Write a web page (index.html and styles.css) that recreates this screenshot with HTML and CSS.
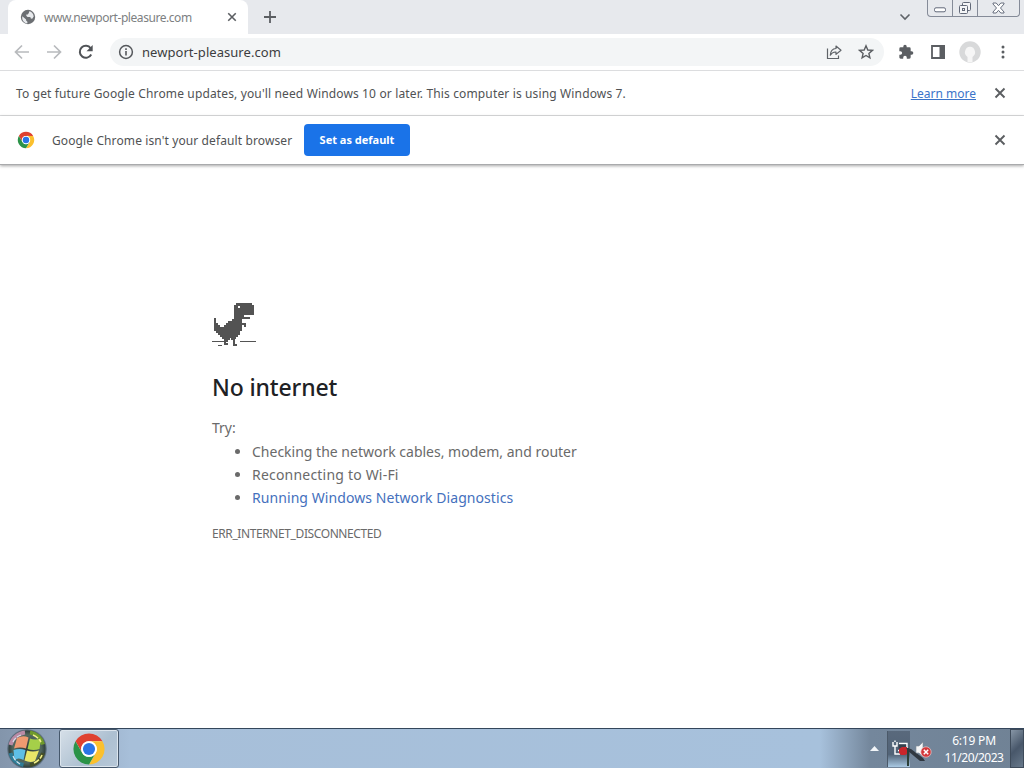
FILE: index.html
```
<!DOCTYPE html>
<html lang="en">
  <head>
    <meta charset="UTF-8" />
    <meta name="viewport" content="width=device-width, initial-scale=1.0" />
    <title>newport-pleasure.com</title>
    <link rel="stylesheet" href="styles.css">
  </head>
  <body>
    <!-- shared icons -->
    <svg class="defs" width="0" height="0">
      <symbol id="close" viewBox="0 0 12 12">
        <path d="M1.5 1.5l9 9M10.5 1.5l-9 9" fill="none" stroke="currentColor" stroke-width="1.9" />
      </symbol>
      <symbol id="chrome" viewBox="0 0 48 48">
        <circle cx="24" cy="24" r="20" fill="#fff" />
        <path fill="#df4130" d="M4.95 13A22 22 0 0 1 43.05 13H24A11 11 0 0 0 14.47 29.5Z" />
        <path fill="#fbc02d" transform="rotate(120 24 24)" d="M4.95 13A22 22 0 0 1 43.05 13H24A11 11 0 0 0 14.47 29.5Z" />
        <path fill="#2b9348" transform="rotate(240 24 24)" d="M4.95 13A22 22 0 0 1 43.05 13H24A11 11 0 0 0 14.47 29.5Z" />
        <circle cx="24" cy="24" r="11" fill="#fff" />
        <circle cx="24" cy="24" r="8.6" fill="#2a75e6" />
      </symbol>
    </svg>

    <header class="tab-strip">
      <div class="tab">
        <svg class="globe" width="16" height="16" viewBox="0 0 16 16">
          <circle cx="8" cy="8" r="7.2" fill="#6c6f73" />
          <path d="M2.3 7.2l3.8 3.2v1.2l1.3 1.2v1.5C4 14 1.7 11.5 2.3 7.2zM9.3 2.2C11.5 2.7 13.5 4.5 13.7 7.5l-1.5 2.3-1.4-.2-.5-1.7H7.5L6.3 6.8V5.4h1.500l1-1.400z" fill="#e8eaed" />
        </svg>
        <span class="tab-title">www.newport-pleasure.com</span>
        <svg class="tab-close" width="10" height="10"><use href="#close" /></svg>
      </div>
      <svg class="new-tab" width="12" height="12" viewBox="0 0 12 12">
        <path d="M6 0v12M0 6h12" stroke="#5b5e62" stroke-width="1.8" />
      </svg>
      <svg class="tab-search" width="12" height="8" viewBox="0 0 12 8">
        <path d="M1.5 1.5L6 6l4.5-4.5" fill="none" stroke="#5f6368" stroke-width="1.6" />
      </svg>
      <div class="window-buttons">
        <span class="win-btn win-min">
          <svg width="12" height="6" viewBox="0 0 12 6"><rect x=".5" y=".8" width="11" height="4" rx="1.5" fill="#fff" stroke="#62697a" /></svg>
        </span>
        <span class="win-btn win-max">
          <svg width="14" height="14" viewBox="0 0 14 14" fill="#f4f5f7" stroke="#626978">
            <rect x="4.5" y="1.5" width="8" height="8" rx="1" />
            <rect x="1.5" y="4.5" width="8" height="8" rx="1" />
            <rect x="4.5" y="7.5" width="2" height="2" />
          </svg>
        </span>
        <span class="win-btn win-close">
          <svg width="13" height="12" viewBox="0 0 13 12">
            <path d="M1 1h3.200l2.300 2.700L8.800 1H12v1L8.500 6l3.500 4v1H8.800L6.500 8.300 4.200 11H1v-1l3.500-4L1 2z" fill="#fff" stroke="#686f7e" />
          </svg>
        </span>
      </div>
    </header>

    <nav class="toolbar">
      <svg class="back" width="16" height="16" viewBox="0 0 16 16" fill="none" stroke="#b8babd" stroke-width="1.7">
        <path d="M15 8H2M8 1.500L1.500 8 8 14.500" />
      </svg>
      <svg class="forward" width="16" height="16" viewBox="0 0 16 16" fill="none" stroke="#b8babd" stroke-width="1.7">
        <path d="M1 8h13M8 1.500L14.500 8 8 14.500" />
      </svg>
      <svg class="reload" width="16" height="16" viewBox="0 0 16 16">
        <path d="M13.200 10.500A6 6 0 1 1 12.700 4.300" fill="none" stroke="#505357" stroke-width="2" />
        <path d="M14.700 1v6.200H8.500z" fill="#505357" />
      </svg>
      <div class="omnibox">
        <svg width="16" height="16" viewBox="0 0 16 16">
          <circle cx="8" cy="8" r="6.4" fill="none" stroke="#55585c" stroke-width="1.5" />
          <path d="M8 7v4.600M8 4.300v1.600" stroke="#55585c" stroke-width="1.6" />
        </svg>
        <span class="url">newport-pleasure.com</span>
        <svg class="share" width="16" height="16" viewBox="0 0 16 16" fill="none" stroke="#5f6368" stroke-width="1.2">
          <path d="M1.500 4.500v10h11v-3" />
          <path d="M10 2l5 4.200-5 4.200V8C7.500 7.800 5.500 9 4.300 11.200 4.500 7.500 6.500 4.700 10 4.500z" stroke-linejoin="round" />
        </svg>
        <svg class="star" width="16" height="16" viewBox="0 0 16 16">
          <path d="M8 1.800l1.800 4.200 4.600.4-3.500 3 1 4.500L8 11.500l-3.900 2.400 1-4.500-3.500-3 4.600-.4z" fill="none" stroke="#5b5e62" stroke-width="1.4" />
        </svg>
      </div>
      <svg class="puzzle" width="16" height="16" viewBox="0 0 24 24">
        <path fill="#5b5e62" d="M20.500 11H19V7a2 2 0 0 0-2-2h-4V3.500a2.500 2.500 0 0 0-5 0V5H4a2 2 0 0 0-2 2v3.800h1.500a2.700 2.700 0 0 1 0 5.400H2V20c0 1.100.9 2 2 2h3.800v-1.500a2.700 2.700 0 0 1 5.400 0V22H17a2 2 0 0 0 2-2v-4h1.500a2.500 2.500 0 0 0 0-5z" />
      </svg>
      <svg class="side-panel" width="14" height="14" viewBox="0 0 14 14">
        <path d="M1 1h12v12H1z" fill="none" stroke="#5b5e62" stroke-width="1.800" />
        <path d="M8.500 0H14v14H8.500z" fill="#5b5e62" />
      </svg>
      <svg class="avatar" width="22" height="22" viewBox="0 0 22 22">
        <circle cx="11" cy="11" r="10.700" fill="#d8d9da" />
        <path d="M7.500 15A5 5 0 0 1 6.300 9.500a4.800 4.800 0 0 1 9.400 0 5 5 0 0 1-1.200 5.500l-1 1V21a10 10 0 0 1-5 0v-5z" fill="#f6f6f6" />
      </svg>
      <svg class="menu" width="4" height="14" viewBox="0 0 4 14" fill="#5b5e62">
        <circle cx="2" cy="2" r="1.5" /><circle cx="2" cy="7" r="1.5" /><circle cx="2" cy="12" r="1.5" />
      </svg>
    </nav>

    <div class="infobar update-bar">
      <span class="update-text">To get future Google Chrome updates, you'll need Windows 10 or later. This computer is using Windows 7.</span>
      <a class="learn-more" href="#">Learn more</a>
      <svg class="bar-close" width="12" height="12"><use href="#close" /></svg>
    </div>
    <div class="infobar default-bar">
      <svg class="chrome-small" width="18" height="18"><use href="#chrome" /></svg>
      <span class="default-text">Google Chrome isn't your default browser</span>
      <button class="set-default">Set as default</button>
      <svg class="bar-close" width="12" height="12"><use href="#close" /></svg>
    </div>

    <main class="page">
      <svg class="dino" width="46" height="46" viewBox="0 0 46 46" shape-rendering="crispEdges" fill="#535353">
        <g transform="translate(2 1) scale(2)">
          <path d="M11 0h8v1h1v5h-5v1h3v1h-4v2h2v2h-1v-1h-1v3h-1v2h-1v1h-1v1h-.5v2.500h1v1h-2v-3h-1v-1H8v1H7v1H6v.5h1v1H5V18H4v-1H3v-1H2v-1H1v-1H0V7.500h1V10h1v1h1v1h2v-1h1v-1h1V9h2V8h1V1h1z" />
          <path fill="#fff" d="M12 1.500h1v1h-1z" />
        </g>
        <path d="M0 39h12v1H0zM28 39h16v1H28zM6 43h4v1H6z" />
      </svg>
      <h1>No internet</h1>
      <p class="try">Try:</p>
      <ul>
        <li><span>Checking the network cables, modem, and router</span></li>
        <li><span class="wifi">Reconnecting to Wi-Fi</span></li>
        <li><a href="#">Running Windows Network Diagnostics</a></li>
      </ul>
      <p class="error-code">ERR_INTERNET_DISCONNECTED</p>
    </main>

    <footer class="taskbar">
      <svg class="start" width="44" height="39" viewBox="0 0 44 39">
        <defs>
          <radialGradient id="orb" cx=".5" cy=".5" r=".5">
            <stop offset="0" stop-color="#2c3833" />
            <stop offset=".7" stop-color="#52685f" />
            <stop offset=".9" stop-color="#33433f" />
            <stop offset="1" stop-color="#46586a" stop-opacity=".3" />
          </radialGradient>
        </defs>
        <circle cx="20" cy="20" r="20" fill="url(#orb)" />
        <path d="M3.500 16A17 17 0 0 1 18 3.500" stroke="#b98ba6" stroke-width="4" fill="none" />
        <path d="M23 3.500a17 17 0 0 1 13 12" stroke="#6f9a2c" stroke-width="4" fill="none" />
        <path d="M3.500 24a17 17 0 0 0 13 12" stroke="#2e7c97" stroke-width="4" fill="none" />
        <path d="M23 36a17 17 0 0 0 13-12" stroke="#454f27" stroke-width="4" fill="none" />
        <path d="M10 9q6-3 11.500-.5L19 19.500q-6-2-12 0z" fill="#ee9a70" />
        <path d="M23 9.500q5 2 11 0L32.500 20q-6 2-12 0z" fill="#a5cf49" />
        <path d="M6.500 21q6-2 12 0L16.500 31q-5-3-9 0z" fill="#5fbfe6" />
        <path d="M20 21.500q6 2 12 0L28 32q-5 2-10.500-.5z" fill="#e9e668" />
        <path d="M6 13q2-5 8-7M6 27q2 5 7 8" fill="none" stroke="#d5e3ec" stroke-width="1.200" stroke-dasharray="5 1.500" />
        <path d="M26 6q5 2 8 7M27 34q6-3 8-8" fill="none" stroke="#f3f08a" stroke-width="1.600" stroke-dasharray="6 1.500" />
      </svg>
      <div class="task-chrome"><svg width="34" height="34"><use href="#chrome" /></svg></div>
      <div class="tray">
        <svg class="tray-arrow" width="9" height="5" viewBox="0 0 9 5"><path d="M0 5l4.500-5L9 5z" fill="#f2f5f8" /></svg>
        <div class="network">
          <svg width="40" height="36" viewBox="0 0 40 36">
            <path d="M5 11v4h4v-4M7 9.500V11M7 15v8h5M11 12.500h8v7M10 19.500h4" fill="none" stroke="#fff" stroke-width="1.400" />
            <path d="M10.500 13.500h7.500v5h-7.500z" fill="#36414d" />
            <path d="M11 18l3-2h5v7l-2 1h-4l-2-2z" fill="#c9252b" />
            <path d="M20 17v18" stroke="#2c4038" stroke-width="2" />
            <path d="M18 17l5 1 12 9 2 3h-5L20 20z" fill="#303841" />
          </svg>
        </div>
        <svg class="volume" width="18" height="20" viewBox="0 0 18 20">
          <path d="M1 7h3l4-4v15l-4-4H1z" fill="#f5f6f7" stroke="#7d8a96" stroke-width=".6" />
          <circle cx="11" cy="13" r="5.200" fill="#d3383b" stroke="#ebc8c9" stroke-width=".7" />
          <path d="M8.800 10.800l4.400 4.400M13.200 10.800l-4.400 4.400" stroke="#fff" stroke-width="1.500" />
        </svg>
        <div class="clock"><span class="time">6:19 PM</span><span class="date">11/20/2023</span></div>
        <div class="show-desktop"></div>
      </div>
    </footer>
  </body>
</html>
```
FILE: styles.css
```
* {
  box-sizing: border-box;
}

body {
  margin: 0;
  width: 1024px;
  height: 768px;
  overflow: hidden;
  display: flex;
  flex-direction: column;
  background: #fff;
  color: #505254;
  font-family: "Noto Sans", "Open Sans", sans-serif;
  font-size: 12px;
}

svg {
  display: block;
  flex: none;
}

span,
a {
  white-space: nowrap;
}

.defs {
  position: absolute;
}

/* tabs */
.tab-strip {
  flex: none;
  height: 34px;
  display: flex;
  align-items: center;
  background: #e7e9ed;
}

.tab {
  width: 240px;
  height: 34px;
  margin-left: 8px;
  padding: 0 11px 0 12px;
  display: flex;
  align-items: center;
  background: #fff;
  border-radius: 8px 8px 0 0;
}

.tab-title {
  margin-left: 8px;
  color: #7d7f82;
  letter-spacing: -0.44px;
}

.tab-close {
  margin-left: auto;
  color: #5b5e62;
}

.new-tab {
  margin-left: 16px;
}

.tab-search {
  margin-left: auto;
}

.window-buttons {
  height: 17px;
  margin: 0 4px 0 16px;
  align-self: flex-start;
  display: flex;
  border: 1px solid #858b98;
  border-top: 0;
  border-radius: 0 0 4px 4px;
}

.win-btn {
  display: flex;
  align-items: center;
  justify-content: center;
}

.win-min {
  width: 24px;
  padding-top: 4px;
}

.win-max {
  width: 26px;
  border: solid #858b98;
  border-width: 0 1px;
}

.win-close {
  width: 41px;
}

/* toolbar */
.toolbar {
  flex: none;
  height: 37px;
  padding: 0 19px 0 14px;
  display: flex;
  align-items: center;
  border-bottom: 1px solid #dcdddf;
}

.forward,
.reload {
  margin-left: 16px;
}

.omnibox {
  width: 774px;
  height: 28px;
  margin-left: 16px;
  padding: 0 10px 0 8px;
  display: flex;
  align-items: center;
  background: #f3f5f6;
  border-radius: 14px;
}

.url {
  margin-left: 8px;
  color: #3c3d40;
  font-size: 13px;
  letter-spacing: 0.05px;
}

.share {
  margin-left: auto;
}

.star {
  margin-left: 16px;
}

.puzzle {
  margin-left: 14px;
}

.side-panel {
  margin-left: 17px;
}

.avatar {
  margin-left: 14px;
}

.menu {
  margin-left: auto;
}

/* info bars */
.infobar {
  flex: none;
  display: flex;
  align-items: center;
  padding: 0 18px 0 16px;
}

.update-bar {
  height: 45px;
  border-bottom: 1px solid #dcdddf;
}

.update-text {
  letter-spacing: 0.14px;
}

.default-bar {
  height: 49px;
  border-bottom: 1px solid #a9aaac;
  box-shadow: 0 1px 3px rgba(0, 0, 0, 0.35);
}

.learn-more {
  margin-left: auto;
  color: #3b74c9;
}

.bar-close {
  color: #5b5e61;
}

.update-bar .bar-close {
  margin-left: 18px;
}

.default-bar .bar-close {
  margin-left: auto;
}

.chrome-small {
  margin-left: 1px;
}

.default-text {
  width: 240px;
  margin-left: 17px;
  letter-spacing: 0.11px;
}

.set-default {
  width: 106px;
  height: 32px;
  margin-left: 12px;
  padding: 0 0 2px;
  border: 0;
  border-radius: 4px;
  background: #1a73e8;
  color: #fff;
  font: bold 11px "Noto Sans", sans-serif;
}

/* error page */
.page {
  flex: 1;
  padding: 137px 0 0 212px;
  color: #6a6a6a;
  font-size: 14px;
}

h1 {
  margin: 23px 0 0;
  color: #202124;
  font-size: 23px;
  font-weight: 500;
  line-height: 32px;
  letter-spacing: -0.13px;
}

.try {
  margin: 13px 0 0;
  line-height: 23px;
}

ul {
  margin: 1px 0 0;
  padding-left: 40px;
  line-height: 23px;
}

.wifi {
  letter-spacing: 0.2px;
}

li a {
  color: #4470bd;
  text-decoration: none;
  letter-spacing: 0.07px;
}

.error-code {
  margin: 16px 0 0;
  font-size: 12px;
  line-height: 18px;
  letter-spacing: -0.4px;
}

/* taskbar */
.taskbar {
  flex: none;
  height: 40px;
  display: flex;
  border-top: 1px solid #34465b;
  background: linear-gradient(90deg, #8395ab 0, #91a4bc 60px, #a7bfd9 130px, #a7c1dc 820px, #74879c 870px, #708295 1024px);
}

.start {
  margin-left: 7px;
}

.task-chrome {
  width: 60px;
  height: 39px;
  margin-left: 8px;
  display: flex;
  align-items: center;
  justify-content: center;
  border: 1px solid #46586c;
  border-radius: 3px;
  background: linear-gradient(135deg, #d6dfe8, #adc0d1 60%, #b7c8d8);
  box-shadow: inset 0 0 0 1px #dce5ed;
}

.tray {
  margin-left: auto;
  display: flex;
  align-items: center;
}

.network {
  width: 23px;
  height: 36px;
  margin-left: 8px;
  background: linear-gradient(#59697c, #526377 65%, #a9c9e3);
  border-left: 1px solid #4b5969;
}

.volume {
  margin-left: 5px;
}

.clock {
  width: 64px;
  margin-left: 9px;
  margin-right: 4px;
  display: flex;
  flex-direction: column;
  align-items: center;
  color: #fff;
  font-size: 12px;
  line-height: 17px;
}

.time {
  letter-spacing: -0.2px;
}

.date {
  letter-spacing: -0.5px;
}

.show-desktop {
  width: 14px;
  height: 39px;
  border: 1px solid #3e4b5a;
  background: linear-gradient(135deg, #8796a6, #48576a 50%, #68798b);
}
```
